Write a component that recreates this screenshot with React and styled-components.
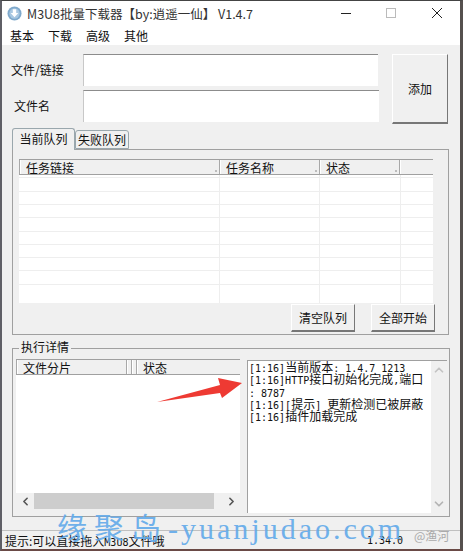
import styled, { createGlobalStyle } from "styled-components";
import { ChevronLeft, ChevronRight, ChevronUp, ChevronDown } from "lucide-react";

const CJK = `"Noto Sans CJK SC", "Liberation Sans", sans-serif`;
const MONO = `"DejaVu Sans Mono", "Liberation Mono", monospace`;

const logLines = [
  [["a", "[1:16]"], ["c", "当前版本"], ["a", ": 1.4.7 1213"]],
  [["a", "[1:16]HTTP"], ["c", "接口初始化完成"], ["a", ","], ["c", "端口"]],
  [["a", ": 8787"]],
  [["a", "[1:16]["], ["c", "提示"], ["a", "] "], ["c", "更新检测已被屏蔽"]],
  [["a", "[1:16]"], ["c", "插件加载完成"]],
];

const App = () => {
  return (
    <Window>
      <GlobalStyle />
      <TitleBar>
        <AppIcon viewBox="0 0 16 16">
          <circle cx="8" cy="8" r="7.5" fill="#7fa9cc" />
          <circle cx="8" cy="8" r="5.5" fill="#a9c8e2" />
          <path d="M6.2 3.5h3.6v4h2.3L8 12 3.9 7.5h2.3z" fill="#fff" />
        </AppIcon>
        <Title>M3U8批量下载器【by:逍遥一仙】 V1.4.7</Title>
        <WinButtons>
          <svg width="12" height="12" viewBox="0 0 12 12"><path d="M2 6.5h10" stroke="#222" strokeWidth="1" /></svg>
          <svg width="12" height="12" viewBox="0 0 12 12"><rect x="1.5" y="1.5" width="9" height="9" fill="none" stroke="#bbb" /></svg>
          <svg width="12" height="12" viewBox="0 0 12 12"><path d="M1 1l10 10M11 1L1 11" stroke="#222" strokeWidth="1" /></svg>
        </WinButtons>
      </TitleBar>

      <MenuBar>
        <span>基本</span>
        <span>下载</span>
        <span>高级</span>
        <span>其他</span>
      </MenuBar>

      <Client>
        <TopForm>
          <Fields>
            <FieldRow>
              <FieldLabel>文件/链接</FieldLabel>
              <Input $w={295} />
            </FieldRow>
            <FieldRow>
              <FieldLabel $indent>文件名</FieldLabel>
              <Input $w={296} />
            </FieldRow>
          </Fields>
          <AddButton>添加</AddButton>
        </TopForm>

        <Tabs>
          <Tab $active>当前队列</Tab>
          <Tab>失败队列</Tab>
        </Tabs>

        <TabPanel>
          <QueueList>
            <ListHeader>
              <HeaderCell $w={200}>任务链接<Grip /></HeaderCell>
              <HeaderCell $w={100}>任务名称<Grip /></HeaderCell>
              <HeaderCell $w={80}>状态<Grip /></HeaderCell>
              <HeaderGap $w={34} />
            </ListHeader>
            <Rows />
          </QueueList>
          <QueueActions>
            <ActionButton>清空队列</ActionButton>
            <ActionButton>全部开始</ActionButton>
          </QueueActions>
        </TabPanel>

        <Group>
          <Legend>执行详情</Legend>
          <PartList>
            <ListHeader>
              <HeaderCell $w={110}>文件分片</HeaderCell>
              <HeaderGap $w={5} />
              <HeaderGap $w={5} />
              <HeaderCell $w={101}>状态</HeaderCell>
            </ListHeader>
            <PartBody />
            <HScroll>
              <ScrollButton><ChevronLeft size={13} strokeWidth={3} color="#555" /></ScrollButton>
              <HThumb />
              <ScrollButton><ChevronRight size={13} strokeWidth={3} color="#555" /></ScrollButton>
            </HScroll>
          </PartList>
          <LogBox>
            <LogText>
              {logLines.map((line, i) => (
                <LogLine key={i}>
                  {line.map(([kind, text], j) =>
                    kind === "a" ? <LogAscii key={j}>{text}</LogAscii> : <span key={j}>{text}</span>
                  )}
                </LogLine>
              ))}
            </LogText>
            <VScroll>
              <ChevronUp size={14} strokeWidth={3} color="#c4c4c4" />
              <ChevronDown size={14} strokeWidth={3} color="#b4b4b4" />
            </VScroll>
          </LogBox>
        </Group>
      </Client>

      <StatusBar>
        <span>提示:可以直接拖入<LogAscii>M3U8</LogAscii>文件哦</span>
        <StatusVersion>1.34.0</StatusVersion>
      </StatusBar>

      <Arrow viewBox="0 0 90 30">
        <path d="M0 25L63 8L61 1L85 6L65 21L63 16Z" fill="#ee3a33" />
      </Arrow>
      <Watermark>
        <WatermarkHan>缘聚岛</WatermarkHan>-yuanjudao.com
      </Watermark>
      <Credit>@渔河</Credit>
    </Window>
  );
};

const GlobalStyle = createGlobalStyle`
  html, body {
    margin: 0;
    padding: 0;
    background: #6b5a58;
  }
`;

const Window = styled.div`
  position: relative;
  box-sizing: border-box;
  width: 463px;
  height: 551px;
  overflow: hidden;
  display: flex;
  flex-direction: column;
  background: #f0f0f0;
  border-left: 2px solid #5f5f66;
  border-right: 3px solid #55504e;
  border-top: 1px solid #444;
  border-bottom: 2px solid #6a4a46;
  font-family: ${CJK};
  font-size: 12px;
  color: #111;
`;

const TitleBar = styled.div`
  display: flex;
  align-items: center;
  height: 24px;
  padding-left: 5px;
  background: #fff;
`;

const AppIcon = styled.svg`
  width: 15px;
  height: 15px;
  margin-right: 5px;
`;

const Title = styled.div`
  font-size: 12.5px;
  color: #333;
  white-space: nowrap;
`;

const WinButtons = styled.div`
  display: flex;
  align-items: center;
  gap: 34px;
  margin-left: auto;
  margin-right: 17px;
`;

const MenuBar = styled.div`
  display: flex;
  gap: 14px;
  height: 20px;
  align-items: center;
  padding-left: 8px;
  background: #fff;
  font-size: 12px;
`;

const Client = styled.div`
  flex: 1;
  display: flex;
  flex-direction: column;
  padding: 9px 0 0 10px;
`;

const TopForm = styled.div`
  display: flex;
  height: 69px;
`;

const Fields = styled.div`
  display: flex;
  flex-direction: column;
  gap: 4px;
`;

const FieldRow = styled.div`
  display: flex;
  align-items: center;
`;

const FieldLabel = styled.label`
  box-sizing: border-box;
  width: 72px;
  margin-left: -1px;
  padding-left: ${(p) => (p.$indent ? 3 : 0)}px;
  padding-bottom: 2px;
  font-size: 12px;
`;

const Input = styled.div`
  box-sizing: border-box;
  width: ${(p) => p.$w}px;
  height: 32px;
  background: #fff;
  border-top: 1px solid #8c8c8c;
  border-left: 1px solid #c8c8c8;
`;

const AddButton = styled.button`
  box-sizing: border-box;
  width: 56px;
  height: 70px;
  margin-left: 13px;
  padding: 0;
  background: #f0f0f0;
  border: 1px solid #fff;
  border-right: 1px solid #777;
  border-bottom: 2px solid #777;
  font: 12px ${CJK};
  color: #111;
`;

const Tabs = styled.div`
  display: flex;
  align-items: flex-end;
  height: 21px;
  margin-top: 5px;
`;

const Tab = styled.div`
  box-sizing: border-box;
  display: flex;
  align-items: center;
  justify-content: center;
  width: ${(p) => (p.$active ? 63 : 54)}px;
  height: ${(p) => (p.$active ? 22 : 19)}px;
  margin-bottom: ${(p) => (p.$active ? -1 : 0)}px;
  padding-bottom: ${(p) => (p.$active ? 2 : 0)}px;
  background: #f0f0f0;
  border: 1px solid #9aa7ad;
  border-bottom: ${(p) => (p.$active ? "none" : "1px solid #9aa7ad")};
  border-radius: 3px 3px 0 0;
  font-size: 12px;
  position: relative;
  z-index: ${(p) => (p.$active ? 1 : 0)};
`;

const TabPanel = styled.div`
  box-sizing: border-box;
  width: 437px;
  height: 186px;
  padding: 9px 0 0 6px;
  border: 1px solid #a0a0a0;
`;

const QueueList = styled.div`
  width: 414px;
  height: 144px;
  display: flex;
  flex-direction: column;
  background: #fff;
`;

const ListHeader = styled.div`
  display: flex;
  flex: none;
  height: 16px;
  box-sizing: border-box;
  overflow: hidden;
  background: #f0f0f0;
  border-top: 1px solid #a0a0a0;
  border-bottom: 1px solid #a0a0a0;
`;

const HeaderGap = styled.div`
  box-sizing: border-box;
  flex: none;
  width: ${(p) => p.$w}px;
  border-left: 1px solid #a8a8a8;
  box-shadow: inset 1px 0 #fff;
`;

const HeaderCell = styled(HeaderGap)`
  position: relative;
  padding-left: 6px;
  font-size: 12px;
  line-height: 15px;
  white-space: nowrap;
`;

const Grip = styled.i`
  position: absolute;
  right: 2px;
  bottom: 2px;
  width: 2px;
  height: 2px;
  background: #bcbcbc;
`;

const Rows = styled.div`
  flex: 1;
  background-image:
    repeating-linear-gradient(to bottom, transparent 0 12.3px, #eeeeee 12.3px 13.3px),
    linear-gradient(to right, transparent 200px, #eeeeee 200px 201px, transparent 201px 300px, #eeeeee 300px 301px, transparent 301px 381px, #eeeeee 381px 382px, transparent 382px);
  background-position: 0 -10px, 0 0;
`;

const QueueActions = styled.div`
  display: flex;
  justify-content: flex-end;
  gap: 16px;
  width: 416px;
  margin-top: 1px;
`;

const ActionButton = styled.button`
  box-sizing: border-box;
  width: 64px;
  height: 28px;
  padding: 0;
  background: #f0f0f0;
  border: 1px solid #fff;
  border-right: 1px solid #777;
  border-bottom: 2px solid #777;
  font: 12px ${CJK};
  color: #111;
`;

const Group = styled.div`
  position: relative;
  box-sizing: border-box;
  display: flex;
  align-items: flex-start;
  gap: 7px;
  width: 438px;
  height: 169px;
  margin-top: 13px;
  padding: 10px 2px 0 3px;
  border: 1px solid #a0a0a0;
`;

const Legend = styled.div`
  position: absolute;
  top: -10px;
  left: 6px;
  padding: 0 2px;
  background: #f0f0f0;
  font-size: 12px;
  line-height: 16px;
`;

const PartList = styled.div`
  width: 224px;
  height: 150px;
  flex: none;
  display: flex;
  flex-direction: column;
  background: #fff;
`;

const PartBody = styled.div`
  flex: 1;
`;

const HScroll = styled.div`
  display: flex;
  align-items: center;
  justify-content: space-between;
  height: 16px;
  background: #f0f0f0;
`;

const ScrollButton = styled.div`
  width: 18px;
  display: flex;
  justify-content: center;
`;

const HThumb = styled.div`
  width: 180px;
  height: 16px;
  margin-right: auto;
  background: #cdcdcd;
`;

const LogBox = styled.div`
  flex: 1;
  display: flex;
  height: 152px;
  margin-top: 1px;
  background: #fff;
  border-top: 1px solid #a0a0a0;
  border-left: 1px solid #a0a0a0;
`;

const LogText = styled.div`
  flex: 1;
  padding: 0 0 0 1px;
  font-size: 12px;
  color: #111;
`;

const LogLine = styled.div`
  height: 12.25px;
  line-height: 12px;
  white-space: pre;
`;

const LogAscii = styled.span`
  font-family: ${MONO};
  font-size: 10px;
`;

const VScroll = styled.div`
  width: 16px;
  display: flex;
  flex-direction: column;
  align-items: center;
  justify-content: space-between;
  padding: 2px 0;
  box-sizing: border-box;
  background: #f0f0f0;
`;

const StatusBar = styled.div`
  display: flex;
  align-items: center;
  flex: none;
  box-sizing: border-box;
  height: 19px;
  padding-left: 3px;
  border-top: 1px solid #c0c0c0;
  font-size: 12px;
`;

const StatusVersion = styled.span`
  margin-left: auto;
  margin-right: 57px;
  font-family: ${MONO};
  font-size: 10px;
`;

const Arrow = styled.svg`
  position: absolute;
  left: 155px;
  top: 376px;
  width: 90px;
  height: 30px;
`;

const Watermark = styled.div`
  position: absolute;
  left: 55px;
  top: 510px;
  font-family: "Liberation Serif", "Noto Sans CJK SC", serif;
  font-size: 30px;
  line-height: 36px;
  letter-spacing: 3px;
  color: #62aaea;
  opacity: 0.9;
  white-space: nowrap;
`;

const WatermarkHan = styled.span`
  letter-spacing: 7px;
`;

const Credit = styled.div`
  position: absolute;
  left: 412px;
  top: 526px;
  font-size: 12px;
  color: #aaa;
`;

export default App;
